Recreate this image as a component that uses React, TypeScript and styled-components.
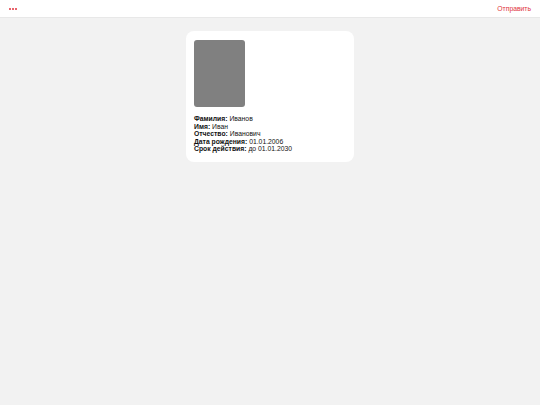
import React from 'react'
import styled, { createGlobalStyle } from 'styled-components'

const GlobalStyle = createGlobalStyle`
  html, body {
    margin: 0;
    padding: 0;
    height: 100%;
    background: #f2f2f2;
    font-family: "Liberation Sans", Arial, sans-serif;
  }
  #root {
    min-height: 100%;
  }
`

const Page = styled.div`
  min-height: 405px;
  background: #f2f2f2;
`

const Toolbar = styled.div`
  height: 17px;
  background: #ffffff;
  border-bottom: 1px solid #e8e8e8;
  display: flex;
  align-items: center;
  justify-content: space-between;
  padding: 0 9px;
`

const MenuButton = styled.button`
  border: none;
  background: none;
  padding: 0;
  display: flex;
  gap: 1px;
  cursor: pointer;
`

const Dot = styled.span`
  width: 2px;
  height: 2px;
  border-radius: 1px;
  background: #e0313b;
`

const SendButton = styled.button`
  border: none;
  background: none;
  padding: 0;
  font-family: inherit;
  font-size: 6.8px;
  color: #e0313b;
  cursor: pointer;
`

const Content = styled.main`
  display: flex;
  justify-content: center;
  padding-top: 13px;
`

const Card = styled.section`
  width: 168px;
  box-sizing: border-box;
  background: #ffffff;
  border-radius: 8px;
  padding: 9px 8px 9px 8px;
  display: flex;
  flex-direction: column;
  gap: 8px;
`

const Photo = styled.div`
  width: 51px;
  height: 67px;
  border-radius: 3px;
  background: #808080;
`

const Fields = styled.div`
  display: flex;
  flex-direction: column;
`

const Line = styled.div`
  font-size: 6.8px;
  line-height: 7.6px;
  color: #111111;
`

const Label = styled.b`
  font-weight: 700;
`

const fields = [
  ['Фамилия', 'Иванов'],
  ['Имя', 'Иван'],
  ['Отчество', 'Иванович'],
  ['Дата рождения', '01.01.2006'],
  ['Срок действия', 'до 01.01.2030'],
]

export default function App(): JSX.Element {
  return (
    <>
      <GlobalStyle />
      <Page>
        <Toolbar>
          <MenuButton aria-label="menu">
            <Dot />
            <Dot />
            <Dot />
          </MenuButton>
          <SendButton>Отправить</SendButton>
        </Toolbar>
        <Content>
          <Card>
            <Photo />
            <Fields>
              {fields.map(([label, value]) => (
                <Line key={label}>
                  <Label>{label}:</Label> {value}
                </Line>
              ))}
            </Fields>
          </Card>
        </Content>
      </Page>
    </>
  )
}
